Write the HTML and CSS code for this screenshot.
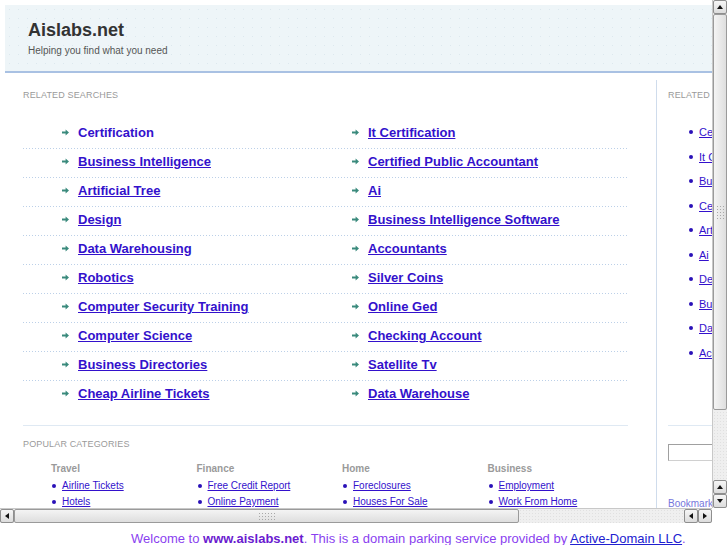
FILE: index.html
```html
<!DOCTYPE html>
<html>
<head>
<meta charset="utf-8">
<title>Aislabs.net</title>
<link rel="stylesheet" href="styles.css">
</head>
<body>
<div class="frame">
  <div class="viewport">
    <div class="page">
      <div class="header">
        <div class="title">Aislabs.net</div>
        <div class="tagline">Helping you find what you need</div>
      </div>
      <div class="content">
        <div class="main">
          <div class="label">RELATED SEARCHES</div>
          <div class="results">
            <div class="row"><div class="cell"><span class="arrow"><svg width="7" height="7" viewBox="0 0 7 7"><path d="M0 2.6h3.6V0.6L7 3.5 3.6 6.4V4.4H0z" fill="#3a8a7c"/></svg></span><a class="plain">Certification</a></div><div class="cell"><span class="arrow"><svg width="7" height="7" viewBox="0 0 7 7"><path d="M0 2.6h3.6V0.6L7 3.5 3.6 6.4V4.4H0z" fill="#3a8a7c"/></svg></span><a>It Certification</a></div></div>
            <div class="row"><div class="cell"><span class="arrow"><svg width="7" height="7" viewBox="0 0 7 7"><path d="M0 2.6h3.6V0.6L7 3.5 3.6 6.4V4.4H0z" fill="#3a8a7c"/></svg></span><a>Business Intelligence</a></div><div class="cell"><span class="arrow"><svg width="7" height="7" viewBox="0 0 7 7"><path d="M0 2.6h3.6V0.6L7 3.5 3.6 6.4V4.4H0z" fill="#3a8a7c"/></svg></span><a>Certified Public Accountant</a></div></div>
            <div class="row"><div class="cell"><span class="arrow"><svg width="7" height="7" viewBox="0 0 7 7"><path d="M0 2.6h3.6V0.6L7 3.5 3.6 6.4V4.4H0z" fill="#3a8a7c"/></svg></span><a>Artificial Tree</a></div><div class="cell"><span class="arrow"><svg width="7" height="7" viewBox="0 0 7 7"><path d="M0 2.6h3.6V0.6L7 3.5 3.6 6.4V4.4H0z" fill="#3a8a7c"/></svg></span><a>Ai</a></div></div>
            <div class="row"><div class="cell"><span class="arrow"><svg width="7" height="7" viewBox="0 0 7 7"><path d="M0 2.6h3.6V0.6L7 3.5 3.6 6.4V4.4H0z" fill="#3a8a7c"/></svg></span><a>Design</a></div><div class="cell"><span class="arrow"><svg width="7" height="7" viewBox="0 0 7 7"><path d="M0 2.6h3.6V0.6L7 3.5 3.6 6.4V4.4H0z" fill="#3a8a7c"/></svg></span><a>Business Intelligence Software</a></div></div>
            <div class="row"><div class="cell"><span class="arrow"><svg width="7" height="7" viewBox="0 0 7 7"><path d="M0 2.6h3.6V0.6L7 3.5 3.6 6.4V4.4H0z" fill="#3a8a7c"/></svg></span><a>Data Warehousing</a></div><div class="cell"><span class="arrow"><svg width="7" height="7" viewBox="0 0 7 7"><path d="M0 2.6h3.6V0.6L7 3.5 3.6 6.4V4.4H0z" fill="#3a8a7c"/></svg></span><a>Accountants</a></div></div>
            <div class="row"><div class="cell"><span class="arrow"><svg width="7" height="7" viewBox="0 0 7 7"><path d="M0 2.6h3.6V0.6L7 3.5 3.6 6.4V4.4H0z" fill="#3a8a7c"/></svg></span><a>Robotics</a></div><div class="cell"><span class="arrow"><svg width="7" height="7" viewBox="0 0 7 7"><path d="M0 2.6h3.6V0.6L7 3.5 3.6 6.4V4.4H0z" fill="#3a8a7c"/></svg></span><a>Silver Coins</a></div></div>
            <div class="row"><div class="cell"><span class="arrow"><svg width="7" height="7" viewBox="0 0 7 7"><path d="M0 2.6h3.6V0.6L7 3.5 3.6 6.4V4.4H0z" fill="#3a8a7c"/></svg></span><a>Computer Security Training</a></div><div class="cell"><span class="arrow"><svg width="7" height="7" viewBox="0 0 7 7"><path d="M0 2.6h3.6V0.6L7 3.5 3.6 6.4V4.4H0z" fill="#3a8a7c"/></svg></span><a>Online Ged</a></div></div>
            <div class="row"><div class="cell"><span class="arrow"><svg width="7" height="7" viewBox="0 0 7 7"><path d="M0 2.6h3.6V0.6L7 3.5 3.6 6.4V4.4H0z" fill="#3a8a7c"/></svg></span><a>Computer Science</a></div><div class="cell"><span class="arrow"><svg width="7" height="7" viewBox="0 0 7 7"><path d="M0 2.6h3.6V0.6L7 3.5 3.6 6.4V4.4H0z" fill="#3a8a7c"/></svg></span><a>Checking Account</a></div></div>
            <div class="row"><div class="cell"><span class="arrow"><svg width="7" height="7" viewBox="0 0 7 7"><path d="M0 2.6h3.6V0.6L7 3.5 3.6 6.4V4.4H0z" fill="#3a8a7c"/></svg></span><a>Business Directories</a></div><div class="cell"><span class="arrow"><svg width="7" height="7" viewBox="0 0 7 7"><path d="M0 2.6h3.6V0.6L7 3.5 3.6 6.4V4.4H0z" fill="#3a8a7c"/></svg></span><a>Satellite Tv</a></div></div>
            <div class="row"><div class="cell"><span class="arrow"><svg width="7" height="7" viewBox="0 0 7 7"><path d="M0 2.6h3.6V0.6L7 3.5 3.6 6.4V4.4H0z" fill="#3a8a7c"/></svg></span><a>Cheap Airline Tickets</a></div><div class="cell"><span class="arrow"><svg width="7" height="7" viewBox="0 0 7 7"><path d="M0 2.6h3.6V0.6L7 3.5 3.6 6.4V4.4H0z" fill="#3a8a7c"/></svg></span><a>Data Warehouse</a></div></div>
          </div>
          <div class="popular">
            <div class="label">POPULAR CATEGORIES</div>
            <div class="cats">
              <div class="cat"><div class="cat-title">Travel</div><ul><li><a>Airline Tickets</a></li><li><a>Hotels</a></li></ul></div>
              <div class="cat"><div class="cat-title">Finance</div><ul><li><a>Free Credit Report</a></li><li><a>Online Payment</a></li></ul></div>
              <div class="cat"><div class="cat-title">Home</div><ul><li><a>Foreclosures</a></li><li><a>Houses For Sale</a></li></ul></div>
              <div class="cat"><div class="cat-title">Business</div><ul><li><a>Employment</a></li><li><a>Work From Home</a></li></ul></div>
            </div>
          </div>
        </div>
        <div class="side">
          <div class="label">RELATED SEARCHES</div>
          <ul class="side-list">
            <li><a>Certification</a></li>
            <li><a>It Certification</a></li>
            <li><a>Business Intelligence</a></li>
            <li><a>Certified Public Accountant</a></li>
            <li><a>Artificial Tree</a></li>
            <li><a>Ai</a></li>
            <li><a>Design</a></li>
            <li><a>Business Intelligence Software</a></li>
            <li><a>Data Warehousing</a></li>
            <li><a>Accountants</a></li>
          </ul>
          <div class="search"><input class="search-input" type="text"></div>
          <div class="bookmark">Bookmark this page</div>
        </div>
      </div>
    </div>
  </div>
  <div class="vscroll">
    <div class="sbtn"><span class="tri up"></span></div>
    <div class="vthumb"><span class="grip vgrip"></span></div>
    <div class="vtrack"></div>
    <div class="sbtn"><span class="tri up"></span></div>
    <div class="sbtn"><span class="tri down"></span></div>
  </div>
  <div class="hscroll">
    <div class="sbtn"><span class="tri left"></span></div>
    <div class="hthumb"><span class="grip hgrip"></span></div>
    <div class="htrack"></div>
    <div class="sbtn"><span class="tri left"></span></div>
    <div class="sbtn"><span class="tri right"></span></div>
  </div>
  <div class="corner"></div>
</div>
<div class="footer">Welcome to <b>www.aislabs.net</b>. This is a domain parking service provided by <a>Active-Domain LLC</a>.</div>
</body>
</html>
```

FILE: styles.css
```css
html, body {
  margin: 0;
  padding: 0;
  background: #ffffff;
  font-family: "Liberation Sans", Arial, sans-serif;
}

.frame {
  display: grid;
  grid-template-columns: 712px 15px;
  grid-template-rows: 508px 15px;
  width: 727px;
  height: 523px;
}

.viewport {
  overflow: hidden;
  background: #fff;
}

.page {
  width: 780px;
  padding: 5px 0 0 5px;
}

.header {
  background-color: #eef5f8;
  background-image: radial-gradient(circle, #dde8ee 0.6px, transparent 0.8px);
  background-size: 9px 9px;
  border-bottom: 2px solid #a9c1e3;
  padding: 15px 0 0 23px;
  box-sizing: border-box;
  height: 68px;
}

.title {
  font-size: 18px;
  font-weight: bold;
  line-height: 21px;
  color: #333333;
}

.tagline {
  font-size: 10px;
  line-height: 12px;
  margin-top: 4px;
  color: #555555;
}

.content {
  display: flex;
  margin-top: 7px;
}

.main {
  width: 605px;
  padding: 10px 28px 0 18px;
  border-right: 1px solid #cfdcec;
  height: 460px;
}

.label {
  font-size: 9px;
  line-height: 11px;
  letter-spacing: 0.15px;
  color: #9a9a9a;
}

.results {
  margin-top: 19px;
}

.row {
  display: grid;
  grid-template-columns: 290px 1fr;
  padding: 5px 0 9px 0;
  background-image: linear-gradient(90deg, #bcd0e8 1px, transparent 1px);
  background-size: 3px 1px;
  background-repeat: repeat-x;
  background-position: 0 100%;
}

.row:last-child {
  background-image: none;
}

.cell {
  display: flex;
  align-items: center;
  padding-left: 39px;
  line-height: 15px;
}

.arrow {
  display: inline-flex;
  width: 7px;
  height: 7px;
  margin-right: 9px;
}

.cell a {
  font-size: 13px;
  font-weight: bold;
  color: #3311cc;
  text-decoration: underline;
}

.cell a.plain {
  text-decoration: none;
}

.popular {
  margin-top: 15px;
  border-top: 1px solid #dfe9f3;
  padding-top: 13px;
}

.cats {
  display: grid;
  grid-template-columns: 145.5px 145.5px 145.5px 145.5px;
  padding-left: 28px;
  margin-top: 13px;
}

.cat-title {
  font-size: 10px;
  font-weight: bold;
  line-height: 12px;
  color: #9a9a9a;
}

.cat ul {
  list-style: none;
  margin: 3px 0 0 0;
  padding: 0;
}

.cat li {
  display: flex;
  align-items: center;
  line-height: 16px;
  font-size: 10px;
}

.cat li::before,
.side-list li::before {
  content: "";
  width: 4px;
  height: 4px;
  border-radius: 50%;
  background: #2a11b8;
  margin: 0 6px 0 1px;
  flex: none;
}

.cat li a {
  color: #3311cc;
  text-decoration: underline;
  white-space: nowrap;
}

.side {
  padding: 10px 0 0 11px;
  width: 200px;
}

.side-list {
  list-style: none;
  margin: 19px 0 0 0;
  padding: 0 0 0 21px;
}

.side-list li {
  display: flex;
  align-items: center;
  line-height: 24.5px;
  font-size: 11px;
  white-space: nowrap;
}

.side-list li::before {
  margin: 0 6px 0 0;
}

.side-list li a {
  color: #3311cc;
  text-decoration: underline;
}

.search {
  margin-top: 60px;
  border-top: 1px solid #dfe9f3;
  padding-top: 18px;
}

.search-input {
  display: block;
  box-sizing: border-box;
  width: 140px;
  height: 17px;
  margin: 0;
  border: 1px solid #a0a0a0;
  border-right-color: #d0d0d0;
  border-bottom-color: #d0d0d0;
  padding: 0;
  background: #fff;
}

.bookmark {
  margin-top: 37px;
  font-size: 10px;
  line-height: 12px;
  color: #7676dc;
  white-space: nowrap;
}

/* scrollbars */
.vscroll {
  display: flex;
  flex-direction: column;
  background: #efefef;
  background-image: radial-gradient(circle, #e0e0e0 0.6px, transparent 0.8px);
  background-size: 3px 3px;
  border-left: 1px solid #c8c8c8;
  box-sizing: border-box;
}

.hscroll {
  display: flex;
  background: #efefef;
  background-image: radial-gradient(circle, #e0e0e0 0.6px, transparent 0.8px);
  background-size: 3px 3px;
  border-top: 1px solid #c8c8c8;
  box-sizing: border-box;
}

.corner {
  background: #ffffff;
}

.sbtn {
  flex: none;
  width: 14px;
  height: 14px;
  box-sizing: border-box;
  border: 1px solid #8e8e8e;
  border-radius: 2px;
  background: linear-gradient(#f6f6f6, #dcdcdc);
  display: flex;
  align-items: center;
  justify-content: center;
}

.vthumb {
  flex: 0 0 396px;
  box-sizing: border-box;
  border: 1px solid #9a9a9a;
  border-radius: 2px;
  background: linear-gradient(90deg, #f4f4f4, #dedede);
  display: flex;
  align-items: center;
  justify-content: center;
}

.vtrack,
.htrack {
  flex: 1;
}

.hthumb {
  flex: 0 0 505px;
  box-sizing: border-box;
  border: 1px solid #9a9a9a;
  border-radius: 2px;
  background: linear-gradient(#f4f4f4, #dedede);
  display: flex;
  align-items: center;
  justify-content: center;
}

.grip {
  display: block;
  background-image: radial-gradient(circle, #a8a8a8 0.7px, transparent 0.9px);
  background-size: 3px 3px;
}

.vgrip {
  width: 9px;
  height: 15px;
}

.hgrip {
  width: 17px;
  height: 8px;
}

.tri {
  width: 0;
  height: 0;
  display: block;
}

.tri.up {
  border-left: 3px solid transparent;
  border-right: 3px solid transparent;
  border-bottom: 4px solid #111;
}

.tri.down {
  border-left: 3px solid transparent;
  border-right: 3px solid transparent;
  border-top: 4px solid #111;
}

.tri.left {
  border-top: 3px solid transparent;
  border-bottom: 3px solid transparent;
  border-right: 4px solid #111;
}

.tri.right {
  border-top: 3px solid transparent;
  border-bottom: 3px solid transparent;
  border-left: 4px solid #111;
}

.footer {
  padding: 8px 0 0 131px;
  font-size: 13px;
  line-height: 15px;
  color: #8a3ff0;
  white-space: nowrap;
}

.footer b {
  color: #6a1bd0;
}

.footer a {
  color: #2020d0;
  text-decoration: underline;
}
```
